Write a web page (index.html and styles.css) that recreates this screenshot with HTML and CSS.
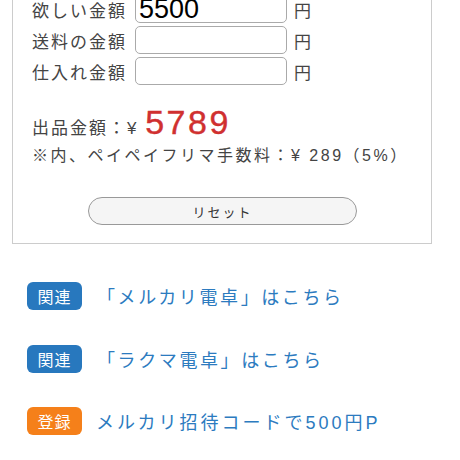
FILE: index.html
```html
<!DOCTYPE html>
<html lang="ja">
<head>
    <meta charset="UTF-8">
    <title>ペイペイフリマ電卓</title>
    <link rel="stylesheet" href="styles.css">
</head>
<body>
    <div class="calc-box">
        <div class="calc-row">
            <label class="calc-label" for="want">欲しい金額</label>
            <input type="text" id="want" class="calc-input big" value="5500">
            <span class="yen">円</span>
        </div>
        <div class="calc-row">
            <label class="calc-label" for="ship">送料の金額</label>
            <input type="text" id="ship" class="calc-input">
            <span class="yen">円</span>
        </div>
        <div class="calc-row">
            <label class="calc-label" for="cost">仕入れ金額</label>
            <input type="text" id="cost" class="calc-input">
            <span class="yen">円</span>
        </div>

        <div class="result">出品金額：¥ <span class="price">5789</span></div>
        <div class="note">※内、ペイペイフリマ手数料：¥ 289（5%）</div>

        <div class="reset-wrap">
            <button class="reset">リセット</button>
        </div>
    </div>

    <!-- related links -->
    <ul class="links">
        <li><span class="badge">関連</span><a href="#">「メルカリ電卓」はこちら</a></li>
        <li><span class="badge">関連</span><a href="#">「ラクマ電卓」はこちら</a></li>
        <li><span class="badge orange">登録</span><a href="#" class="tight">メルカリ招待コードで500円P</a></li>
    </ul>
</body>
</html>
```

FILE: styles.css
```css
body {
    margin: 0;
    padding: 0;
    background-color: #fff;
    color: #333;
    font-family: "Liberation Sans", "Noto Sans CJK JP", sans-serif;
}
.calc-box {
    width: 381px;
    margin: -17px 0 0 12px;
    padding: 11px 18px 18px 19px;
    border: 1px solid #ccc;
}
.calc-row {
    display: flex;
    align-items: center;
    height: 28px;
    margin-bottom: 3px;
}
.calc-label {
    width: 103px;
    font-size: 17px;
    letter-spacing: 2px;
    color: #444;
}
.calc-input {
    box-sizing: border-box;
    width: 152px;
    height: 28px;
    border: 1px solid #aaa;
    border-radius: 5px;
    padding: 0 3px;
    font-family: "Liberation Sans", sans-serif;
    font-size: 16px;
    color: #000;
    background: #fff;
}
.calc-input.big {
    font-size: 27px;
}
.yen {
    margin-left: 7px;
    font-size: 17px;
    color: #444;
}
.result {
    margin-top: 19px;
    font-size: 17px;
    letter-spacing: 2px;
    line-height: 20px;
    color: #444;
}
.price {
    font-size: 34px;
    letter-spacing: 2.5px;
    line-height: 36px;
    color: #d03030;
    -webkit-text-stroke: 0.4px #d03030;
}
.note {
    margin-top: 5px;
    font-size: 16px;
    letter-spacing: 2.5px;
    line-height: 22px;
    color: #444;
}
.reset-wrap {
    margin-top: 30px;
    text-align: center;
}
.reset {
    width: 269px;
    height: 28px;
    border: 1px solid #999;
    border-radius: 14px;
    background: #f5f5f5;
    font-family: "Noto Sans CJK JP", sans-serif;
    font-size: 13px;
    letter-spacing: 2px;
    color: #333;
    cursor: pointer;
}

/* related links */
.links {
    list-style: none;
    margin: 38px 0 0 27px;
    padding: 0;
}
.links li {
    display: flex;
    align-items: center;
    height: 28px;
    margin-bottom: 34.5px;
}
.badge {
    display: inline-block;
    width: 55px;
    height: 28px;
    line-height: 28px;
    border-radius: 6px;
    background: #2878be;
    color: #fff;
    text-align: center;
    font-size: 16px;
    letter-spacing: 1px;
    font-family: "Noto Sans CJK JP", sans-serif;
}
.badge.orange {
    background: #f5801a;
}
.links a {
    margin-left: 15px;
    font-size: 18px;
    letter-spacing: 2.6px;
    color: #2c7bbf;
    text-decoration: none;
}
.links a.tight {
    margin-left: 14px;
    letter-spacing: 3px;
}
```
